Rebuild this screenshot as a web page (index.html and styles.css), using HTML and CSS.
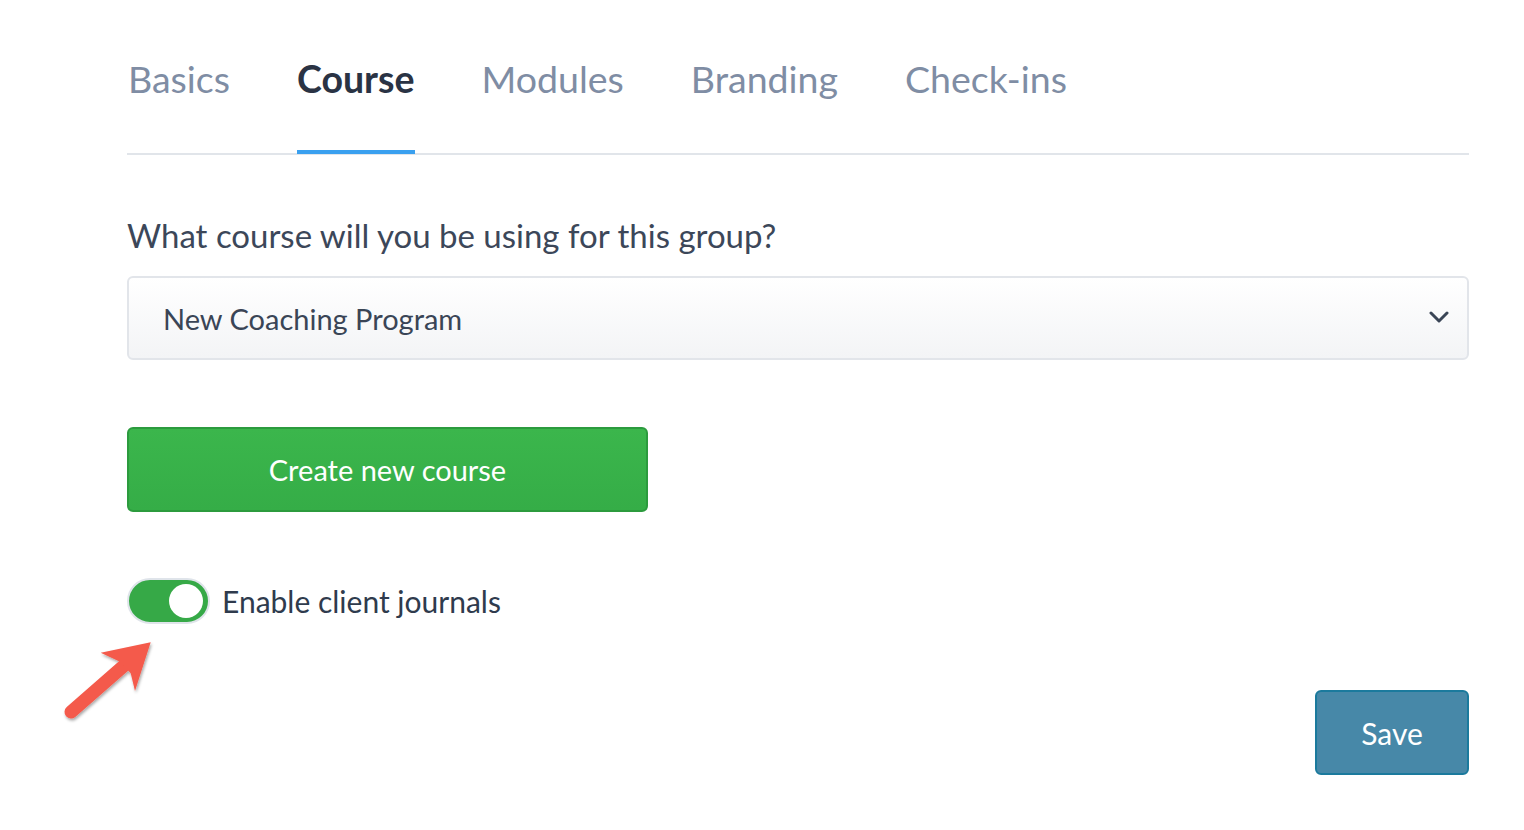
FILE: index.html
```html
<!DOCTYPE html>
<html lang="en">
<head>
<meta charset="utf-8">
<title>Course settings</title>
<link rel="stylesheet" href="styles.css">
</head>
<body>
<div class="page">
  <nav class="tabs">
    <a class="tab">Basics</a>
    <a class="tab active">Course</a>
    <a class="tab">Modules</a>
    <a class="tab">Branding</a>
    <a class="tab">Check-ins</a>
  </nav>
  <section class="form">
    <label class="question">What course will you be using for this group?</label>
    <div class="select">
      <span class="select-value">New Coaching Program</span>
      <svg class="chevron" width="20" height="12" viewBox="0 0 20 12"><path d="M2 2 L10 10 L18 2" fill="none" stroke="#3a4556" stroke-width="3" stroke-linecap="round" stroke-linejoin="round"/></svg>
    </div>
    <button class="btn-create">Create new course</button>
    <div class="toggle-row">
      <span class="toggle"><span class="knob"></span></span>
      <span class="toggle-label">Enable client journals</span>
      <svg class="arrow" width="110" height="100" viewBox="0 0 110 100">
        <defs>
          <filter id="sh" x="-20%" y="-20%" width="140%" height="140%">
            <feDropShadow dx="1" dy="2" stdDeviation="1.5" flood-color="#000" flood-opacity="0.35"/>
          </filter>
        </defs>
        <g filter="url(#sh)" fill="#f45a4b">
          <path d="M12 82 L68 33" stroke="#f45a4b" stroke-width="13" stroke-linecap="round"/>
          <path d="M91.7 12.3 L41.7 22.7 L61 31.7 L71.7 43.3 L76 61 Z"/>
        </g>
      </svg>
    </div>
    <div class="actions">
      <button class="btn-save">Save</button>
    </div>
  </section>
</div>
</body>
</html>
```
FILE: styles.css
```css
html, body {
  margin: 0;
  padding: 0;
  background: #ffffff;
}
body {
  font-family: "Source Sans Pro", Lato, "Noto Sans", sans-serif;
  color: #3a4556;
}
.page {
  width: 1342px;
  margin-left: 127px;
  padding-top: 55px;
}
.tabs {
  display: flex;
  gap: 67px;
  border-bottom: 2px solid #e1e5ea;
}
.tab {
  font-size: 37.5px;
  line-height: 48px;
  color: #7f8da4;
  padding-bottom: 47px;
  border-bottom: 4px solid transparent;
  margin-bottom: -1px;
}
.tab:first-child {
  margin-left: 1px;
}
.tab.active {
  color: #2a3344;
  font-weight: 700;
  border-bottom-color: #3aa0ef;
}
.form {
  position: relative;
  display: flex;
  flex-direction: column;
  align-items: flex-start;
  padding-top: 60px;
}
.question {
  font-size: 33px;
  line-height: 40px;
  color: #3c4759;
  margin-bottom: 21px;
}
.select {
  box-sizing: border-box;
  width: 100%;
  height: 84px;
  border: 2px solid #e2e5ea;
  border-radius: 6px;
  background: linear-gradient(#ffffff, #f3f4f6);
  display: flex;
  align-items: center;
  justify-content: space-between;
  padding: 0 18px 0 34px;
}
.select-value {
  font-size: 29px;
  color: #3a4556;
}
.chevron {
  margin-top: -2px;
}
.btn-create {
  margin-top: 67px;
  box-sizing: border-box;
  width: 521px;
  height: 85px;
  border: 2px solid #2c9b3e;
  border-radius: 6px;
  background: linear-gradient(#3bb64c, #35ad47);
  color: #ffffff;
  font-family: inherit;
  font-size: 29px;
  cursor: pointer;
}
.toggle-row {
  position: relative;
  margin-top: 66px;
  display: flex;
  align-items: center;
  gap: 12px;
}
.toggle {
  box-sizing: border-box;
  width: 83px;
  height: 46px;
  border: 2px solid #dfe4ea;
  border-radius: 23px;
  background: #36a947;
  display: flex;
  align-items: center;
  justify-content: flex-end;
  padding-right: 5px;
}
.knob {
  width: 34px;
  height: 34px;
  border-radius: 50%;
  background: #ffffff;
}
.toggle-label {
  font-size: 30px;
  color: #2f3b4d;
}
.arrow {
  position: absolute;
  left: -68px;
  top: 52px;
}
.actions {
  align-self: stretch;
  display: flex;
  justify-content: flex-end;
  margin-top: 66px;
}
.btn-save {
  box-sizing: border-box;
  width: 154px;
  height: 85px;
  border: 2px solid #1b7a9d;
  border-radius: 6px;
  background: #4788a8;
  color: #ffffff;
  font-family: inherit;
  font-size: 30px;
  cursor: pointer;
}
```
